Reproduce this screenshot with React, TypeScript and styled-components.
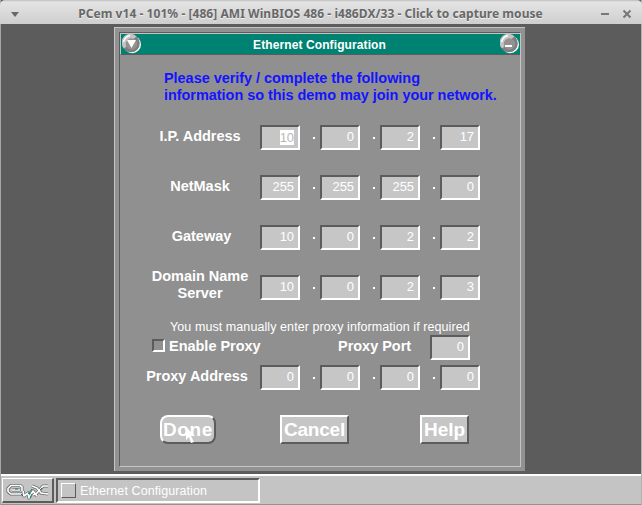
import React from 'react';
import styled, { createGlobalStyle } from 'styled-components';

const Global = createGlobalStyle`
  * { box-sizing: border-box; }
  body { margin: 0; background: #5c5c5c; overflow: hidden; font-family: "Liberation Sans", Arial, sans-serif; }
`;

const Screen = styled.div`
  width: 642px; height: 505px; display: flex; flex-direction: column;
  background: #5c5c5c; border-left: 1px solid #a6a6a6; border-right: 1px solid #b2b2b2;
`;
const HostBar = styled.header`
  height: 24px; flex: none; display: grid; grid-template-columns: 28px 1fr 54px; align-items: center;
  background: linear-gradient(#bdbdbd 0, #e4e4e4 2px, #dadada 12px, #cecece 24px);
  margin: 0 -1px; border-radius: 5px 5px 0 0;
`;
const HostTitle = styled.div`
  text-align: center; white-space: nowrap; color: #686868;
  font: 700 12px/24px "Noto Sans", sans-serif; letter-spacing: 0.055px;
  padding: 2px 0 0 5px; text-shadow: 0 1px #f0f0f0;
`;
const HostIcons = styled.div`
  display: flex; height: 24px;
`;
const Desktop = styled.main`
  flex: 1; padding: 3px 0 0 113px;
`;
const Frame = styled.section`
  width: 411px; height: 444px; padding: 4px; background: #929292;
  border-left: 1px solid #c4c4c4; border-top: 1px solid #c4c4c4;
`;
const Dialog = styled.div`
  width: 402px; height: 435px; background: #909090; border: 1px solid;
  border-color: #5c5c5c #c4c4c4 #c4c4c4 #5c5c5c;
`;
const TitleBar = styled.div`
  height: 22px; display: flex; align-items: center; justify-content: space-between;
  background: #008272; border-top: 1px solid #c4c4c4; border-left: 1px solid #c4c4c4; border-bottom: 1px solid #5c5c5c;
  color: #fff; font-weight: 700; font-size: 12px; letter-spacing: 0.1px; padding: 0 0 0 1px;
`;
const TitleText = styled.span`
  margin-right: 3px; padding-top: 1px;
`;
const Form = styled.div`
  display: flex; flex-direction: column; padding: 15px 0 0 20px;
`;
const Intro = styled.p`
  margin: 0 0 0 24px; color: #1414ff; font-weight: 700; font-size: 14.500px; line-height: 17px; height: 34px;
  white-space: nowrap; letter-spacing: -0.05px;
`;
const Row = styled.div<{ $top: number }>`
  display: grid; grid-template: 25px / 120px 220px; height: 25px; margin-top: ${p => p.$top}px; align-items: center;
`;
const Label = styled.label<{ $shift?: number; $up?: number }>`
  color: #fff; font-weight: 700; font-size: 14.500px; line-height: 17px; text-align: center;
  letter-spacing: -0.02px; white-space: nowrap;
  margin: ${p => -(p.$up ?? 2)}px 0 0 ${p => p.$shift ?? 0}px;
`;
const Octets = styled.div`
  display: grid; grid-template-columns: 40px 20px 40px 20px 40px 20px 40px; height: 25px; align-items: center;
`;
const Field = styled.div`
  width: 40px; height: 25px; background: #c6c6c6; border: 2px solid; border-color: #5c5c5c #fff #fff #5c5c5c;
  display: flex; justify-content: flex-end; align-items: center; padding: 0 4px 1px 0;
  color: #fff; font-size: 13px; line-height: 16px; letter-spacing: -0.1px;
`;
const Selected = styled.span`
  background: #fff; color: #b8b8b8; height: 15px; line-height: 16px;
`;
const Dot = styled.span`
  width: 2px; height: 2px; background: #fff; margin: 0 0 0 13px;
`;
const Note = styled.div`
  color: #fff; font-size: 12.500px; line-height: 15px; height: 15px; margin: 20px 0 0 30px; white-space: nowrap; letter-spacing: 0.08px;
`;
const ProxyRow = styled.div`
  display: grid; grid-template-columns: 17px 169px 92px 40px; height: 25px; margin: 0 0 0 12px;
  align-items: start;
`;
const ProxyLabel = styled(Label)`
  text-align: left; margin: 3px 0 0;
`;
const Check = styled.span`
  width: 13px; height: 13px; margin-top: 4px; border: 2px solid; border-color: #5c5c5c #fff #fff #5c5c5c;
`;
const Actions = styled.div`
  display: flex; margin: 25px 0 0 20px; align-items: center;
`;
const Button = styled.button<{ $w: number; $gap?: number; $ls?: number }>`
  width: ${p => p.$w}px; height: 29px; margin: 0 ${p => p.$gap ?? 0}px 0 0; padding: 0;
  background: #c6c6c6; color: #fff; border: 2px solid; border-color: #fff #5c5c5c #5c5c5c #fff;
  font: 700 19px/25px "Liberation Sans", sans-serif; letter-spacing: ${p => p.$ls ?? 0}px; white-space: nowrap;
`;
const DefaultButton = styled(Button)`
  border-radius: 8px; position: relative;
`;
const Pointer = styled.svg`
  position: absolute; left: 23px; top: 9px;
`;
const Taskbar = styled.footer`
  height: 31px; flex: none; display: flex; background: #c4c4c4; border-top: 2px solid #fff; border-bottom: 1px solid #929292;
  padding: 2px 0 0 1px; gap: 2px;
`;
const Launch = styled.div`
  width: 52px; height: 25px; border: 1px solid; border-width: 1px 2px 2px 1px; border-color: #fff #5c5c5c #5c5c5c #fff; flex: none;
  padding: 4px 0 0 3px;
`;
const Task = styled.div`
  width: 204px; height: 25px; border: 2px solid; border-color: #5c5c5c #fff #fff #5c5c5c;
  display: flex; align-items: center; gap: 4px; padding-left: 3px; color: #fff; font-size: 12.500px; letter-spacing: 0.09px;
`;
const TaskIcon = styled.span`
  width: 15px; height: 15px; border: 1px solid; border-color: #fff #5c5c5c #5c5c5c #fff;
`;

const Orb = ({ kind }: { kind: 'menu' | 'min' }) => (
  <svg width="20" height="20" viewBox="0 0 20 20">
    <circle cx="10.2" cy="10.4" r="8.8" fill="#fff" />
    <circle cx="9" cy="9.500" r="8.8" fill="#7e7e7e" />
    <path d="M2 14.500A8.500 8.500 0 0 1 14.500 2.500Q11 5 9 8T2 14.500Z" fill="#c4c4c4" />
    <circle cx="9.500" cy="10" r="5.8" fill="#929292" />
    <path d="M1.500 8Q3 2.500 8 1.500" fill="none" stroke="#fff" strokeWidth="1.4" />
    {kind === 'menu'
      ? <path d="M5 6h9l-4.500 8z" fill="#fff" />
      : <path d="M5 11h7v2h-7z" fill="#fff" />}
  </svg>
);

const Logo = () => (
  <svg width="44" height="18" viewBox="0 0 44 18" fill="none" strokeLinejoin="round">
    <g stroke="#6a6a6a" strokeWidth="3.2">
      <path d="M16 8V4L14 2.500H5L2 5.500v3L5 11h11M6 7h8M17 8l1 5 4-3 1 5 4-7 4 5M26 3l5 2 4 5 7 1M42 3h-5l-6 7-4 2" />
    </g>
    <g stroke="#fff" strokeWidth="1.6">
      <path d="M16 8V4L14 2.500H5L2 5.500v3L5 11h11M6 7h8M17 8l1 5 4-3 1 5 4-7 4 5M26 3l5 2 4 5 7 1M42 3h-5l-6 7-4 2" />
    </g>
    <path d="M9 6h3M15 11l2 2M22 11l4-5M24 15l2-4M34 7l2-2" stroke="#008272" strokeWidth="1" />
  </svg>
);

type AddressRowProps = {
  label: React.ReactNode; values: number[]; top: number; selected?: boolean; shift?: number; up?: number;
};

const AddressRow = ({ label, values, top, selected, shift, up }: AddressRowProps) => (
  <Row $top={top}>
    <Label $shift={shift} $up={up}>{label}</Label>
    <Octets>
      {values.map((v, i) => (
        <React.Fragment key={i}>
          {i > 0 && <Dot />}
          <Field>{selected && i === 0 ? <Selected>{v}</Selected> : v}</Field>
        </React.Fragment>
      ))}
    </Octets>
  </Row>
);

export default function App() {
  return (
    <>
      <Global />
      <Screen>
        <HostBar>
          <HostIcons><svg width="28" height="24"><path d="M11 11h8l-4 5z" fill="#686868" /></svg></HostIcons>
          <HostTitle>PCem v14 - 101% - [486] AMI WinBIOS 486 - i486DX/33 - Click to capture mouse</HostTitle>
          <HostIcons><svg width="54" height="24" stroke="#777" strokeWidth="2"><path d="M13 13h8M35.500 9.500l7 7m0-7l-7 7" /></svg></HostIcons>
        </HostBar>
        <Desktop>
          <Frame>
            <Dialog>
              <TitleBar><Orb kind="menu" /><TitleText>Ethernet Configuration</TitleText><Orb kind="min" /></TitleBar>
              <Form>
                <Intro>Please verify / complete the following<br />information so this demo may join your network.</Intro>
                <AddressRow label="I.P. Address" values={[10, 0, 2, 17]} top={21} selected />
                <AddressRow label="NetMask" values={[255, 255, 255, 0]} top={25} />
                <AddressRow label="Gateway" values={[10, 0, 2, 2]} top={25} shift={3} />
                <AddressRow label={<>Domain Name<br />Server</>} values={[10, 0, 2, 3]} top={25} up={6} />
                <Note>You must manually enter proxy information if required</Note>
                <ProxyRow><Check /><ProxyLabel>Enable Proxy</ProxyLabel><ProxyLabel>Proxy Port</ProxyLabel><Field>0</Field></ProxyRow>
                <AddressRow label="Proxy Address" values={[0, 0, 0, 0]} top={5} shift={-6} />
                <Actions>
                  <DefaultButton $w={56} $gap={64} $ls={0.6}>Done<Pointer width="12" height="18"><path d="M1 1l9 9-4 0 3 6-3 1-2-6-3 3z" fill="#fff" /></Pointer></DefaultButton>
                  <Button $w={69} $gap={71} $ls={-0.2}>Cancel</Button>
                  <Button $w={49}>Help</Button>
                </Actions>
              </Form>
            </Dialog>
          </Frame>
        </Desktop>
        <Taskbar>
          <Launch><Logo /></Launch>
          <Task><TaskIcon />Ethernet Configuration</Task>
        </Taskbar>
      </Screen>
    </>
  );
}
